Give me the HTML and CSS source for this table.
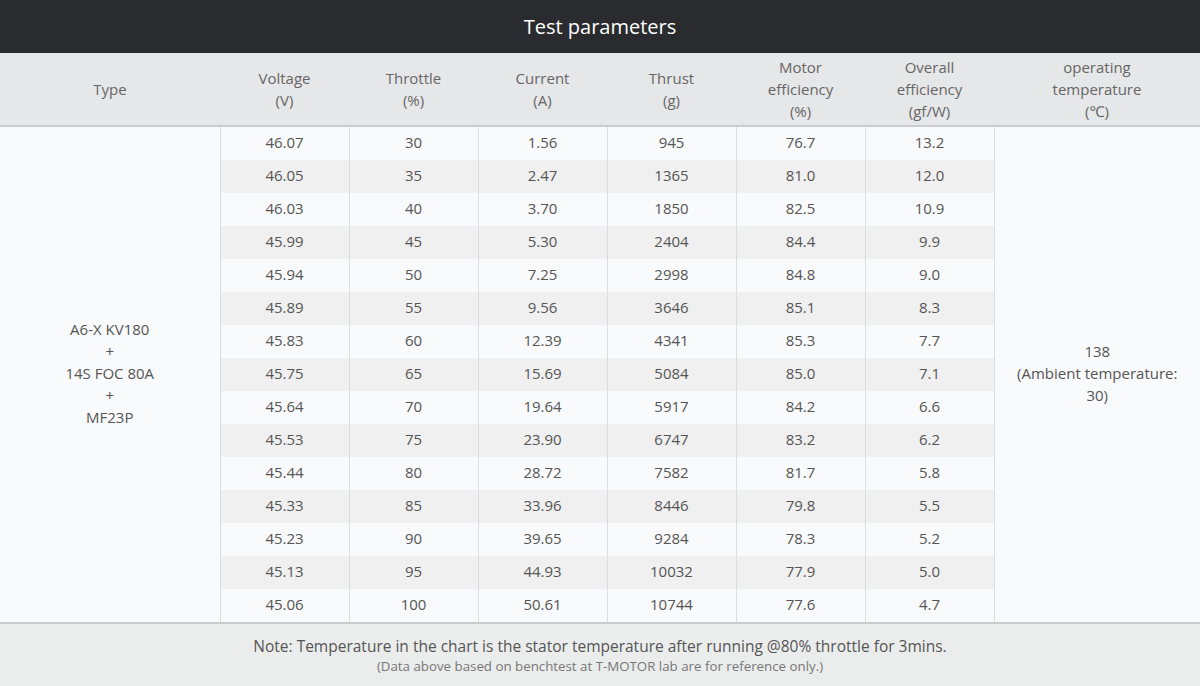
FILE: index.html
```html
<!DOCTYPE html>
<html>
<head>
<meta charset="utf-8">
<link rel="stylesheet" href="styles.css">
</head>
<body>
<div class="wrap">
  <div class="title">Test parameters</div>
  <table class="params">
    <colgroup>
      <col class="c-type"><col class="c-d"><col class="c-d"><col class="c-d"><col class="c-d"><col class="c-d"><col class="c-d"><col class="c-temp">
    </colgroup>
    <thead>
      <tr>
        <th>Type</th>
        <th>Voltage<br>(V)</th>
        <th>Throttle<br>(%)</th>
        <th>Current<br>(A)</th>
        <th>Thrust<br>(g)</th>
        <th>Motor<br>efficiency<br>(%)</th>
        <th>Overall<br>efficiency<br>(gf/W)</th>
        <th>operating<br>temperature<br>(℃)</th>
      </tr>
    </thead>
    <tbody>
      <tr><td class="type" rowspan="15">A6-X KV180<br>+<br>14S FOC 80A<br>+<br>MF23P</td><td>46.07</td><td>30</td><td>1.56</td><td>945</td><td>76.7</td><td>13.2</td><td class="temp" rowspan="15">138<br>(Ambient temperature:<br>30)</td></tr>
      <tr><td>46.05</td><td>35</td><td>2.47</td><td>1365</td><td>81.0</td><td>12.0</td></tr>
      <tr><td>46.03</td><td>40</td><td>3.70</td><td>1850</td><td>82.5</td><td>10.9</td></tr>
      <tr><td>45.99</td><td>45</td><td>5.30</td><td>2404</td><td>84.4</td><td>9.9</td></tr>
      <tr><td>45.94</td><td>50</td><td>7.25</td><td>2998</td><td>84.8</td><td>9.0</td></tr>
      <tr><td>45.89</td><td>55</td><td>9.56</td><td>3646</td><td>85.1</td><td>8.3</td></tr>
      <tr><td>45.83</td><td>60</td><td>12.39</td><td>4341</td><td>85.3</td><td>7.7</td></tr>
      <tr><td>45.75</td><td>65</td><td>15.69</td><td>5084</td><td>85.0</td><td>7.1</td></tr>
      <tr><td>45.64</td><td>70</td><td>19.64</td><td>5917</td><td>84.2</td><td>6.6</td></tr>
      <tr><td>45.53</td><td>75</td><td>23.90</td><td>6747</td><td>83.2</td><td>6.2</td></tr>
      <tr><td>45.44</td><td>80</td><td>28.72</td><td>7582</td><td>81.7</td><td>5.8</td></tr>
      <tr><td>45.33</td><td>85</td><td>33.96</td><td>8446</td><td>79.8</td><td>5.5</td></tr>
      <tr><td>45.23</td><td>90</td><td>39.65</td><td>9284</td><td>78.3</td><td>5.2</td></tr>
      <tr><td>45.13</td><td>95</td><td>44.93</td><td>10032</td><td>77.9</td><td>5.0</td></tr>
      <tr><td>45.06</td><td>100</td><td>50.61</td><td>10744</td><td>77.6</td><td>4.7</td></tr>
    </tbody>
  </table>
  <div class="note">
    <p class="note-main">Note: Temperature in the chart is the stator temperature after running @80% throttle for 3mins.</p>
    <p class="note-sub">(Data above based on benchtest at T-MOTOR lab are for reference only.)</p>
  </div>
</div>
</body>
</html>
```
FILE: styles.css
```css
html, body {
  margin: 0;
  padding: 0;
  background: #f9fafb;
}
.wrap {
  width: 1200px;
  font-family: "Open Sans", "Noto Sans", sans-serif;
  color: #555;
}
.title {
  height: 53px;
  background: #2a2b2e;
  color: #fff;
  font-size: 20px;
  line-height: 53px;
  text-align: center;
}
.params {
  width: 1200px;
  border-collapse: collapse;
  table-layout: fixed;
  font-size: 15px;
}
.c-type { width: 220px; }
.c-d { width: 129px; }
.c-temp { width: 206px; }
.params th {
  height: 72px;
  padding: 0;
  background: #e6e7e8;
  font-weight: normal;
  line-height: 22px;
  color: #666;
  border-bottom: 2px solid #cbcccd;
  vertical-align: middle;
}
.params td {
  height: 29px;
  padding: 0 0 4px;
  text-align: center;
  line-height: 22px;
  border-left: 1px solid #dcdddf;
  border-right: 1px solid #dcdddf;
  background: #f9fafb;
}
.params tbody tr:nth-child(even) td {
  background: #f0f0f0;
}
.params td.type, .params td.temp,
.params tbody tr:nth-child(even) td.type {
  background: #f9fafb;
  border-left: none;
}
.params td.temp { border-right: none; }
.params td.type { border-right: 1px solid #dcdddf; }
.note {
  background: #ebecec;
  border-top: 2px solid #cbcccd;
  height: 64px;
  text-align: center;
  box-sizing: border-box;
  padding-top: 11px;
}
.note p { margin: 0; }
.note-main {
  font-size: 15.5px;
  line-height: 22px;
  color: #555;
}
.note-sub {
  font-size: 13.3px;
  line-height: 19px;
  color: #777;
}
```
